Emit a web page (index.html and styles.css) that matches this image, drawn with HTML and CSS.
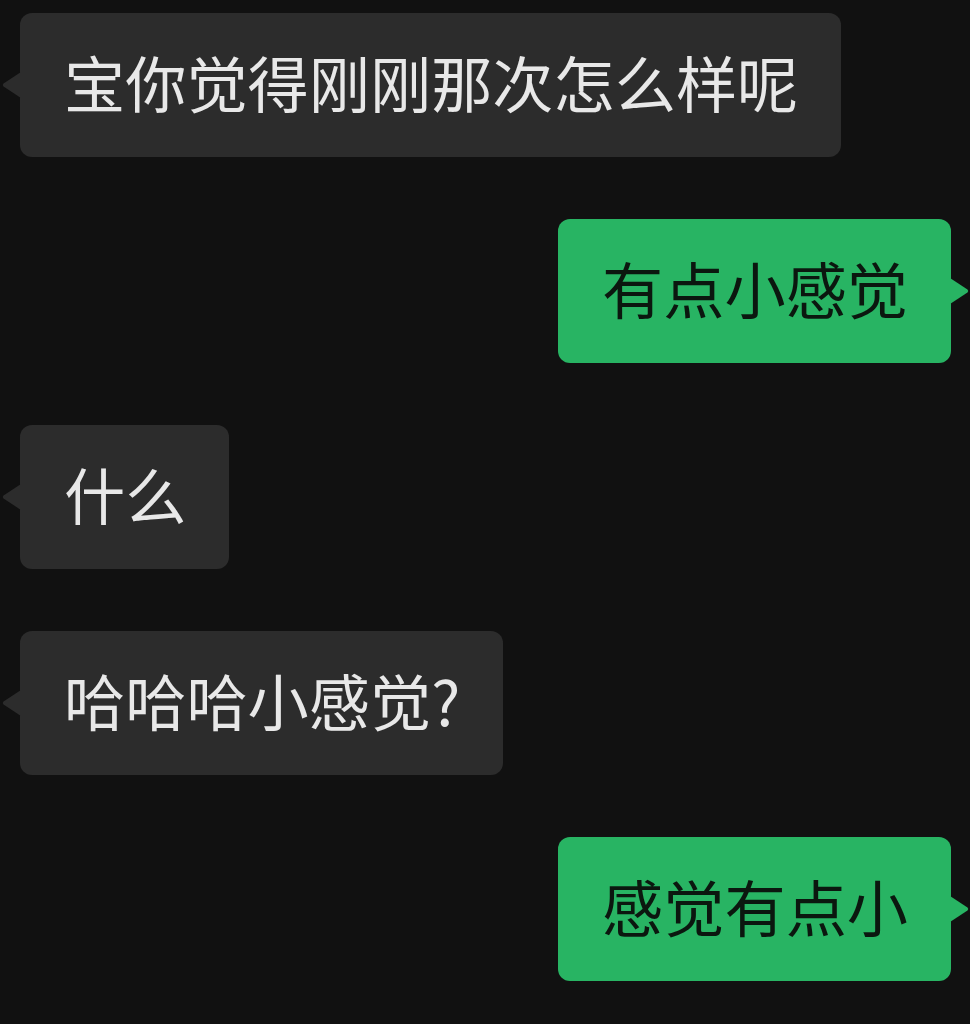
FILE: index.html
```html
<!DOCTYPE html>
<html lang="zh-CN">
<head>
<meta charset="utf-8">
<title>Chat</title>
<link rel="stylesheet" href="styles.css">
</head>
<body>
<div class="chat">
  <div class="row left"><div class="bubble in">宝你觉得刚刚那次怎么样呢</div></div>
  <div class="row right"><div class="bubble out">有点小感觉</div></div>
  <div class="row left"><div class="bubble in">什么</div></div>
  <div class="row left"><div class="bubble in">哈哈哈小感觉?</div></div>
  <div class="row right"><div class="bubble out">感觉有点小</div></div>
</div>
</body>
</html>
```
FILE: styles.css
```css
html, body {
  margin: 0;
  padding: 0;
  background: #111111;
}
body {
  width: 970px;
  height: 1024px;
  overflow: hidden;
  font-family: "Noto Sans CJK SC", "Noto Sans", sans-serif;
}
.chat {
  display: flex;
  flex-direction: column;
  gap: 62px;
  padding-top: 13px;
}
.row {
  display: flex;
}
.row.left {
  justify-content: flex-start;
  padding-left: 20px;
}
.row.right {
  justify-content: flex-end;
  padding-right: 19px;
}
.bubble {
  position: relative;
  font-size: 61.2px;
  line-height: 84px;
  padding: 27px 43px 33px 44px;
  border-radius: 12px;
  white-space: nowrap;
}
.bubble.in {
  background: #2c2c2c;
  color: #e8e8e8;
}
.bubble.out {
  background: #28b463;
  color: #0b170f;
}
.bubble::before {
  content: "";
  position: absolute;
  top: 59px;
  width: 19px;
  height: 26px;
}
.bubble.in::before {
  left: -18px;
  background: #2c2c2c;
  clip-path: polygon(100% 0, 8% 44%, 4% 50%, 8% 56%, 100% 100%);
}
.bubble.out::before {
  right: -18px;
  background: #28b463;
  clip-path: polygon(0 0, 92% 44%, 96% 50%, 92% 56%, 0 100%);
}
```
